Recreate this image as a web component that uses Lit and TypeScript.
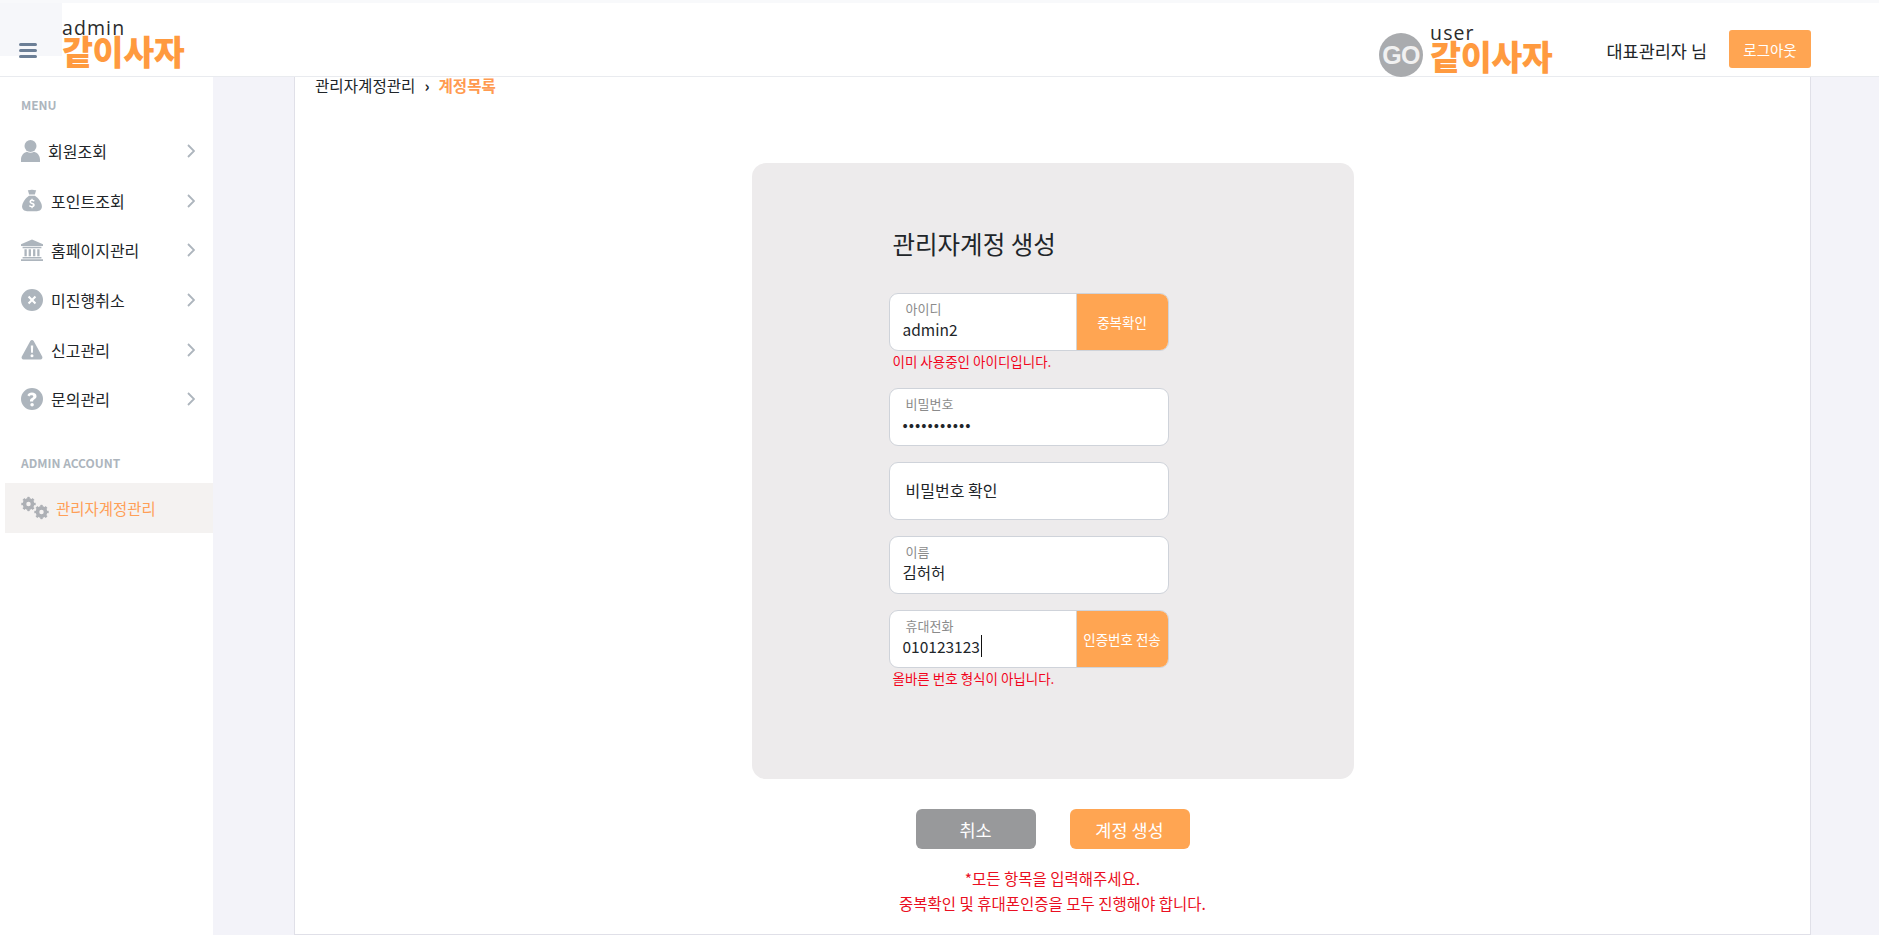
import {html, css, LitElement, svg} from 'lit';
import {customElement} from 'lit/decorators.js';

const icons = {
  user: svg`<circle cx="9.5" cy="6" r="6"/><path d="M0 22v-2.500C0 16 2.500 12.500 6 11.800c1 .6 2.300 1 3.500 1s2.500-.4 3.500-1c3.500.7 6 4.200 6 7.700V22z"/>`,
  money: svg`<path d="M6.200.6c1 .8 2.400-.4 3.800-.1 1.400-.3 2.800.9 3.800.1L12.600 4.800H7.400z"/><path d="M7.300 6h5.400c3 1.900 6.300 6.400 6.300 9.800 0 2.900-2 4.200-4.500 4.200h-9C3 20 1 18.700 1 15.800 1 12.400 4.300 7.900 7.300 6z"/><path fill="#fff" d="M9.500 8.600h1.100v1c.8.1 1.400.4 1.800.7l-.6 1c-.5-.3-1.200-.6-1.800-.6-.6 0-.9.2-.9.6 0 1.100 3.400.6 3.400 3 0 1.100-.7 1.800-1.900 2v1.100H9.500v-1c-.9-.1-1.700-.5-2.200-1l.7-1c.6.5 1.300.8 2 .8.700 0 1.100-.3 1.100-.8 0-1.100-3.400-.7-3.400-3 0-1.100.7-1.800 1.800-2z"/>`,
  bank: svg`<path d="M10.500 0 21 4.600V6.200H0V4.600z"/><path d="M1.500 7h18v1.400h-18zM3.300 9.200h2.200v6.800H3.300zM7.300 9.200h2.200v6.800H7.300zM11.500 9.200h2.200v6.800h-2.200zM15.500 9.200h2.200v6.800h-2.200zM1.500 16.800h18v1.400h-18zM0 18.800h21v1.700H0z"/>`,
  cancel: svg`<path fill-rule="evenodd" d="M10.500 0a10.500 10.500 0 1 1 0 21 10.500 10.500 0 0 1 0-21zM7.900 6.500 6.500 7.900l2.600 2.600-2.600 2.600 1.400 1.400 2.600-2.600 2.600 2.600 1.400-1.400-2.600-2.600 2.600-2.600-1.400-1.400-2.600 2.600z"/>`,
  warn: svg`<path fill-rule="evenodd" d="M10.500 0c.7 0 1.300.4 1.700 1l8.500 15.500c.7 1.300-.2 2.900-1.700 2.900h-17C.5 19.400-.4 17.800.3 16.500L8.800 1c.4-.6 1-1 1.700-1zM9.300 5.600l.3 7.200h1.800l.3-7.200zm1.200 8.600a1.500 1.500 0 1 0 0 3 1.500 1.500 0 0 0 0-3z"/>`,
  help: svg`<path fill-rule="evenodd" d="M10.500 0a10.500 10.500 0 1 1 0 21 10.500 10.500 0 0 1 0-21zm-.1 4.400c-2.100 0-3.500 1-4.300 2.500l1.800 1.300c.6-.8 1.100-1.300 2.300-1.300.8 0 1.500.4 1.500 1.100 0 1.500-3.100 1.400-3.100 4.100v.7h3v-.4c0-1.600 3.200-1.900 3.200-4.500 0-2.200-2.100-3.500-4.400-3.500zm.2 9.800a1.700 1.700 0 1 0 0 3.400 1.700 1.700 0 0 0 0-3.400z"/>`,
};

// gear: a ring plus a dashed outer ring for the teeth
const cog = (cx: number, cy: number, r: number) => svg`
  <circle cx=${cx} cy=${cy} r=${r * 0.58} fill="none" stroke="currentColor" stroke-width=${r * 0.52}/>
  <circle cx=${cx} cy=${cy} r=${r * 0.88} fill="none" stroke="currentColor" stroke-width=${r * 0.3}
    pathLength="16" stroke-dasharray="1 1" stroke-dashoffset="0.5"/>`;

const menu = [
  {label: '회원조회', icon: icons.user, vb: '0 0 19 22', w: 19, h: 22, gap: 8},
  {label: '포인트조회', icon: icons.money, vb: '0 0 20 20.500', w: 22, h: 23, gap: 8},
  {label: '홈페이지관리', icon: icons.bank, vb: '0 0 21 21', w: 22, h: 23, gap: 8},
  {label: '미진행취소', icon: icons.cancel, vb: '0 0 21 21', w: 22, h: 22, gap: 8},
  {label: '신고관리', icon: icons.warn, vb: '0 0 21 20', w: 22, h: 20, gap: 8},
  {label: '문의관리', icon: icons.help, vb: '0 0 21 21', w: 22, h: 22, gap: 8},
];

@customElement('app-root')
export class AppRoot extends LitElement {
  static styles = css`
    :host {
      display: block;
      height: 935px;
      overflow: hidden;
      font-family: "Noto Sans CJK KR", "Noto Sans", sans-serif;
      background: #f3f3f9;
      color: #212529;
    }
    .top {
      display: flex;
      align-items: stretch;
      height: 77px;
      box-sizing: border-box;
      border-top: 3px solid #f8f9fb;
      border-bottom: 1px solid #e9ebef;
      background: #fff;
      position: relative;
      z-index: 2;
    }
    .toggle {
      width: 62px;
      background: linear-gradient(#f6f7fa 53px, #fff 53px);
      display: flex;
      flex-direction: column;
      gap: 3px;
      padding: 40px 0 0 19px;
      box-sizing: border-box;
    }
    .toggle i {
      display: block;
      width: 18px;
      height: 3px;
      border-radius: 2px;
      background: #6c7f96;
    }
    .logo {
      display: flex;
      flex-direction: column;
      align-items: flex-start;
    }
    .logo .en {
      font-family: "Open Sans", sans-serif;
      font-size: 19.500px;
      line-height: 18px;
      letter-spacing: 1.100px;
      color: #2b2b2b;
    }
    .logo .ko {
      font-size: 33.700px;
      font-weight: 900;
      line-height: 28px;
      letter-spacing: -.4px;
      color: #ff9a3f;
    }
    .admin-logo { padding-top: 16px; }
    .right {
      margin-left: auto;
      display: flex;
      align-items: flex-start;
      padding: 27px 68px 0 0;
    }
    .go {
      width: 44px;
      height: 44px;
      margin: 3px 7px 0 0;
      border-radius: 50%;
      background: #a9abae;
      color: #f1f1f1;
      font-family: "Liberation Sans", sans-serif;
      font-size: 25px;
      font-weight: 700;
      display: flex;
      align-items: center;
      justify-content: center;
      letter-spacing: -.5px;
    }
    .user-logo { margin-top: -6px; }
    .who {
      margin: 9px 0 0 54px;
      font-size: 17.500px;
      line-height: 24px;
      white-space: nowrap;
    }
    .logout {
      margin-left: 22px;
      width: 82px;
      height: 38px;
      border-radius: 3px;
      background: #ffa552;
      color: #fff;
      font-size: 14.500px;
      display: flex;
      align-items: center;
      justify-content: center;
    }
    .body {
      display: flex;
      height: 858px;
    }
    .side {
      width: 213px;
      flex: none;
      background: #fff;
      box-sizing: border-box;
      padding-top: 19px;
    }
    .cap {
      margin: 0 0 0 21px;
      font-size: 12px;
      font-weight: 700;
      line-height: 18px;
      color: #adb5bd;
    }
    .items {
      list-style: none;
      margin: 12px 0 0;
      padding: 0;
    }
    .items li {
      height: 49.700px;
      display: flex;
      align-items: center;
      padding: 0 18px 0 21px;
      font-size: 16px;
      color: #212529;
    }
    .items svg.ic {
      fill: #adb5bd;
      flex: none;
    }
    .items .chev {
      margin-left: auto;
      width: 8px;
      height: 14px;
      fill: none;
      stroke: #adb5bd;
      stroke-width: 1.800;
    }
    .cap.second { margin-top: 30px; }
    .active {
      margin: 11px 0 0 5px;
      height: 50px;
      display: flex;
      align-items: center;
      padding-left: 16px;
      background: #f4f2f1;
      font-size: 15.500px;
      color: #ff9f57;
    }
    .active svg {
      width: 28px;
      height: 24px;
      flex: none;
      color: #adb0b5;
      margin-right: 7px;
    }
    .main {
      flex: 1;
      padding: 0 68px 0 81px;
      min-width: 0;
    }
    .card {
      height: 100%;
      box-sizing: border-box;
      background: #fff;
      border: 1px solid #e0e0e8;
      border-top: 0;
    }
    .crumb {
      margin: 0;
      padding: 0 0 0 20px;
      height: 86px;
      display: flex;
      align-items: flex-start;
      font-size: 15.600px;
      line-height: 16px;
      color: #212529;
    }
    .crumb b {
      font-weight: 700;
      margin: 0 9px;
    }
    .crumb span.here {
      color: #ff9a50;
      font-weight: 700;
    }
    .panel {
      width: 602px;
      height: 616px;
      margin: 0 auto;
      box-sizing: border-box;
      padding: 68px 0 0 137px;
      border-radius: 14px;
      background: #edebec;
    }
    h2 {
      margin: 0 0 36px 4px;
      font-size: 24.500px;
      font-weight: 400;
      line-height: 26px;
      color: #212529;
    }
    .field {
      width: 280px;
      height: 58px;
      box-sizing: border-box;
      border: 1px solid #cfd3da;
      border-radius: 9px;
      background: #fff;
      display: flex;
      overflow: hidden;
    }
    .fill {
      flex: 1;
      padding: 6px 0 0 13px;
      min-width: 0;
    }
    .lbl {
      padding-left: 3px;
      font-size: 13px;
      line-height: 17px;
      color: #8b8b8b;
    }
    .val {
      font-size: 15.500px;
      line-height: 24px;
      color: #212529;
      display: flex;
      align-items: center;
    }
    .val.pw { letter-spacing: 1px; }
    .ph {
      padding: 9px 0 0 3px;
      font-size: 16px;
      line-height: 24px;
      color: #212529;
    }
    .caret {
      width: 1px;
      height: 22px;
      margin-left: 1px;
      background: #111;
    }
    .side-btn {
      flex: none;
      width: 91px;
      border-left: 1px solid #d8d4cf;
      background: #ffa552;
      color: #fff;
      font-size: 13.500px;
      display: flex;
      align-items: center;
      justify-content: center;
      white-space: nowrap;
    }
    .err {
      margin: 1px 0 0 4px;
      height: 19px;
      font-size: 13.500px;
      line-height: 19px;
      color: #f2041c;
    }
    .gap-l { margin-top: 17px; }
    .gap-s { margin-top: 16px; }
    .actions {
      display: flex;
      justify-content: center;
      gap: 34px;
      margin-top: 30px;
    }
    .btn {
      width: 120px;
      height: 40px;
      border-radius: 6px;
      color: #fff;
      font-size: 17.500px;
      display: flex;
      align-items: center;
      justify-content: center;
    }
    .btn.grey { background: #98999b; }
    .btn.orange { background: #ffa552; }
    .notes {
      margin: 17px 0 0;
      text-align: center;
      font-size: 15.500px;
      line-height: 25px;
      color: #ea0f22;
    }
  `;

  field(label: string, value: string, opts: {btn?: string; caret?: boolean; pw?: boolean} = {}) {
    return html`
      <div class="field">
        <div class="fill">
          <div class="lbl">${label}</div>
          <div class="val ${opts.pw ? 'pw' : ''}">${value}${opts.caret ? html`<span class="caret"></span>` : ''}</div>
        </div>
        ${opts.btn ? html`<div class="side-btn">${opts.btn}</div>` : ''}
      </div>`;
  }

  render() {
    return html`
      <header class="top">
        <div class="toggle"><i></i><i></i><i></i></div>
        <div class="logo admin-logo">
          <span class="en">admin</span>
          <span class="ko">같이사자</span>
        </div>
        <div class="right">
          <div class="go">GO</div>
          <div class="logo user-logo">
            <span class="en">user</span>
            <span class="ko">같이사자</span>
          </div>
          <div class="who">대표관리자 님</div>
          <div class="logout">로그아웃</div>
        </div>
      </header>
      <div class="body">
        <nav class="side">
          <p class="cap">MENU</p>
          <ul class="items">
            ${menu.map(m => html`
              <li>
                <svg class="ic" viewBox=${m.vb} width=${m.w} height=${m.h} style="margin-right:${m.gap}px">${m.icon}</svg>
                <span>${m.label}</span>
                <svg class="chev" viewBox="0 0 8 14"><path d="M1 1l6 6-6 6"/></svg>
              </li>`)}
          </ul>
          <p class="cap second">ADMIN ACCOUNT</p>
          <div class="active">
            <svg viewBox="0 0 28 24">${cog(7.500, 8, 7)}${cog(20.500, 16, 7)}</svg>
            <span>관리자계정관리</span>
          </div>
        </nav>
        <main class="main">
          <section class="card">
            <p class="crumb"><span>관리자계정관리</span><b>›</b><span class="here">계정목록</span></p>
            <div class="panel">
              <h2>관리자계정 생성</h2>
              ${this.field('아이디', 'admin2', {btn: '중복확인'})}
              <div class="err">이미 사용중인 아이디입니다.</div>
              <div class="gap-l"></div>
              ${this.field('비밀번호', '•••••••••••', {pw: true})}
              <div class="gap-s"></div>
              <div class="field"><div class="fill"><div class="ph">비밀번호 확인</div></div></div>
              <div class="gap-s"></div>
              ${this.field('이름', '김허허')}
              <div class="gap-s"></div>
              ${this.field('휴대전화', '010123123', {btn: '인증번호 전송', caret: true})}
              <div class="err">올바른 번호 형식이 아닙니다.</div>
            </div>
            <div class="actions">
              <div class="btn grey">취소</div>
              <div class="btn orange">계정 생성</div>
            </div>
            <div class="notes">*모든 항목을 입력해주세요.<br>중복확인 및 휴대폰인증을 모두 진행해야 합니다.</div>
          </section>
        </main>
      </div>
    `;
  }
}
